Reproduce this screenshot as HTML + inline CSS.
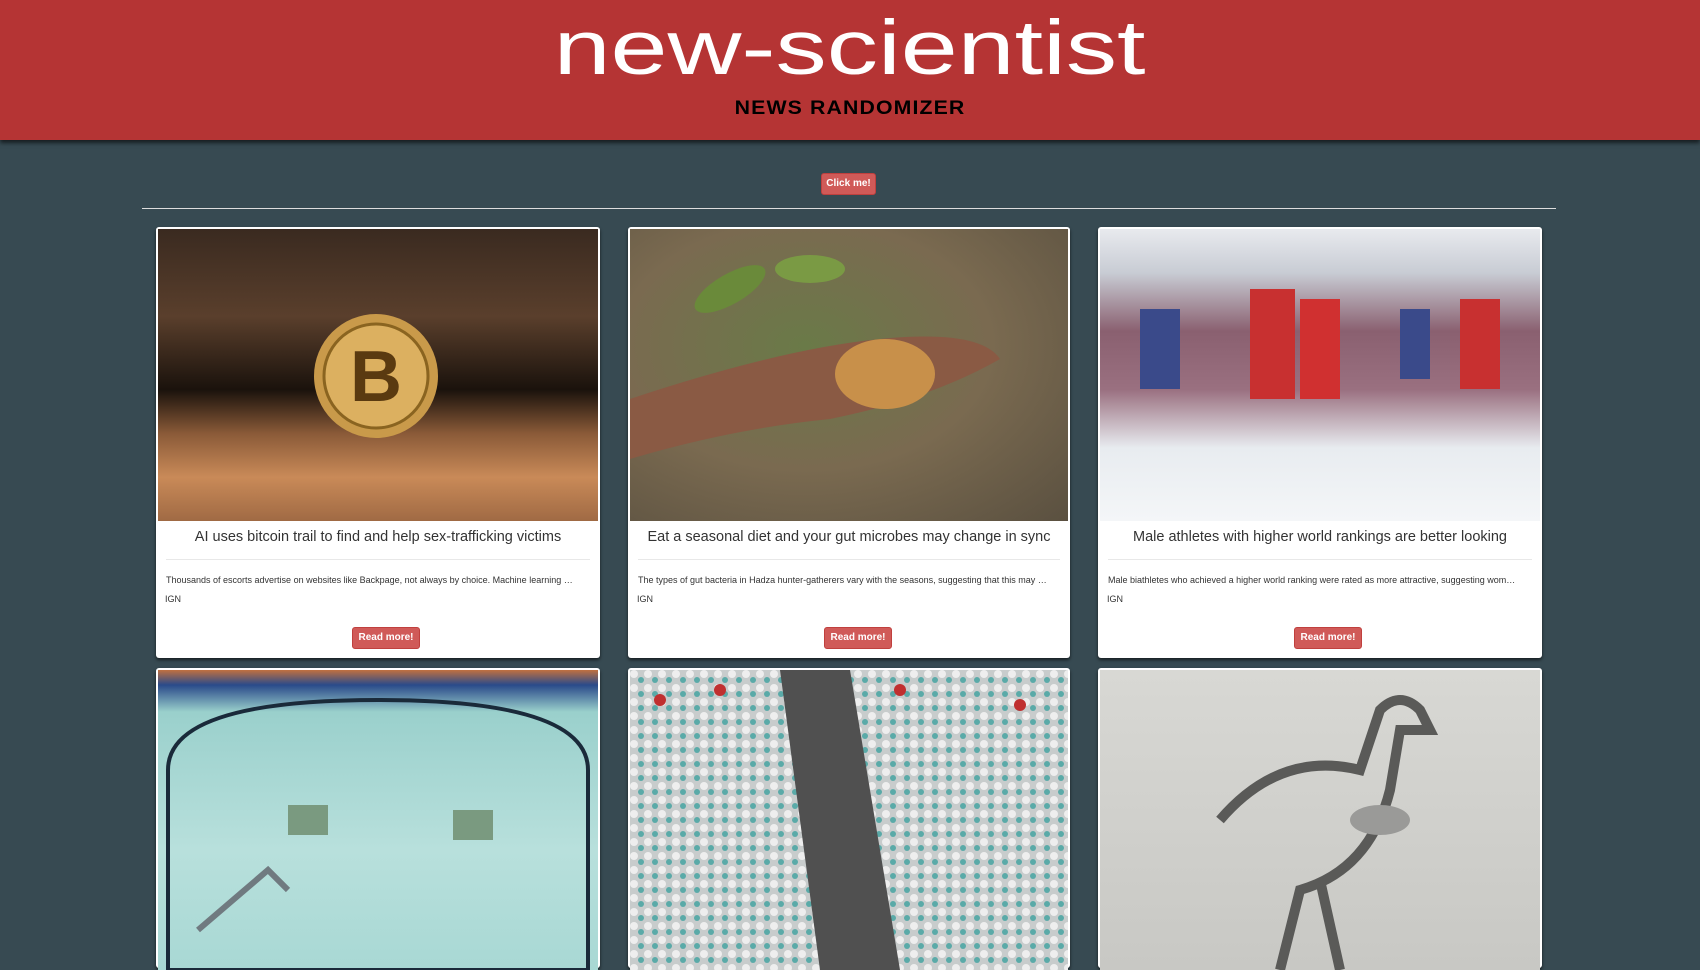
<!DOCTYPE html>
<html><head><meta charset="utf-8"><style>
*{margin:0;padding:0;box-sizing:border-box}
body{width:1700px;height:924px;overflow:hidden;background:#374a52;font-family:"Liberation Sans",sans-serif}
.hdr{position:absolute;left:0;top:0;width:1700px;height:140px;background:#b53434;box-shadow:0 3px 4px rgba(0,0,0,.6)}
.logo{position:absolute;left:0;width:1700px;top:-2px;text-align:center;color:#fff;font-size:77px;letter-spacing:0px;line-height:100px}
.logo span{display:inline-block;transform:scaleX(1.33)}
.sub{position:absolute;left:0;width:1700px;top:98px;text-align:center;font-weight:bold;font-size:19px;letter-spacing:1px;color:#000}
.sub span{display:inline-block;transform:scaleX(1.12)}
.btn{position:absolute;background:#d05a58;color:#fff;font-size:10px;font-weight:bold;text-align:center;border-radius:3px;border:1px solid #c0403e}
.hr{position:absolute;left:142px;top:208px;width:1414px;height:1px;background:#ddd}
.card{position:absolute;background:#fff;border-radius:3px;box-shadow:0 2px 3px rgba(0,0,0,.6)}
.img{position:absolute;left:2px;top:2px;right:2px;overflow:hidden}
.t{position:absolute;left:0;right:0;top:302px;text-align:center;font-size:14.5px;color:#333}
.d{position:absolute;left:10px;right:10px;top:332px;height:1px;background:#e8e8e8}
.p{position:absolute;left:10px;right:8px;top:348px;font-size:9px;color:#333;white-space:nowrap;overflow:hidden}
.s{position:absolute;left:9px;top:367px;font-size:9px;color:#333}
</style></head><body>
<div class="hdr"><div class="logo"><span>new-scientist</span></div><div class="sub"><span>NEWS RANDOMIZER</span></div></div>
<div class="btn" style="left:821px;top:173px;width:55px;height:22px;line-height:20px">Click me!</div>
<div class="hr"></div>

<!-- row 1 -->
<div class="card" style="left:156px;top:227px;width:444px;height:431px">
 <div class="img" style="height:292px;background:linear-gradient(180deg,#3a2a20 0%,#5a3f2c 30%,#1a120c 55%,#8a5a38 70%,#c98a58 85%,#a06a44 100%)">
  <svg width="440" height="292"><circle cx="218" cy="147" r="62" fill="#c99a4a"/><circle cx="218" cy="147" r="52" fill="#dcb060" stroke="#8a6420" stroke-width="3"/><text x="218" y="172" text-anchor="middle" font-size="72" font-weight="bold" fill="#5a3a10" font-family="Liberation Sans">B</text></svg>
 </div>
 <div class="t">AI uses bitcoin trail to find and help sex-trafficking victims</div><div class="d"></div>
 <div class="p">Thousands of escorts advertise on websites like Backpage, not always by choice. Machine learning …</div><div class="s">IGN</div>
 <div class="btn" style="left:196px;top:400px;width:68px;height:22px;line-height:20px">Read more!</div>
</div>
<div class="card" style="left:628px;top:227px;width:442px;height:431px">
 <div class="img" style="height:292px;background:radial-gradient(ellipse at 40% 40%,#6a7a48 0%,#7a6a50 50%,#5a5040 100%)">
  <svg width="440" height="292"><path d="M0 170 Q150 120 250 110 Q350 100 370 130 Q300 170 200 190 Q100 200 0 230Z" fill="#8a5a44"/><ellipse cx="255" cy="145" rx="50" ry="35" fill="#c8904a"/><ellipse cx="100" cy="60" rx="40" ry="15" fill="#6a8a3a" transform="rotate(-30 100 60)"/><ellipse cx="180" cy="40" rx="35" ry="14" fill="#7a9a44"/></svg>
 </div>
 <div class="t">Eat a seasonal diet and your gut microbes may change in sync</div><div class="d"></div>
 <div class="p">The types of gut bacteria in Hadza hunter-gatherers vary with the seasons, suggesting that this may …</div><div class="s">IGN</div>
 <div class="btn" style="left:196px;top:400px;width:68px;height:22px;line-height:20px">Read more!</div>
</div>
<div class="card" style="left:1098px;top:227px;width:444px;height:431px">
 <div class="img" style="height:292px;background:linear-gradient(180deg,#e8eaee 0%,#c8ccd4 15%,#8a6070 35%,#9a7080 55%,#e8ecf0 75%,#f4f6f8 100%)">
  <svg width="440" height="292"><rect x="150" y="60" width="45" height="110" fill="#c83030"/><rect x="200" y="70" width="40" height="100" fill="#d03030"/><rect x="40" y="80" width="40" height="80" fill="#3a4a8a"/><rect x="360" y="70" width="40" height="90" fill="#c83030"/><rect x="300" y="80" width="30" height="70" fill="#3a4a8a"/></svg>
 </div>
 <div class="t">Male athletes with higher world rankings are better looking</div><div class="d"></div>
 <div class="p">Male biathletes who achieved a higher world ranking were rated as more attractive, suggesting wom…</div><div class="s">IGN</div>
 <div class="btn" style="left:196px;top:400px;width:68px;height:22px;line-height:20px">Read more!</div>
</div>

<!-- row 2 -->
<div class="card" style="left:156px;top:668px;width:444px;height:300px">
 <div class="img" style="height:300px;background:linear-gradient(180deg,#c07040 0%,#2a4a8a 5%,#9ad0cc 14%,#b8e0dc 60%,#a8d8d4 100%)">
  <svg width="440" height="300"><path d="M10 100 Q10 30 220 30 Q430 30 430 100 L430 300 L10 300Z" fill="none" stroke="#1a2a3a" stroke-width="4"/><rect x="130" y="135" width="40" height="30" fill="#7a9a80"/><rect x="295" y="140" width="40" height="30" fill="#7a9a80"/><path d="M40 260 L110 200 L130 220" fill="none" stroke="#707a80" stroke-width="6"/></svg>
 </div>
</div>
<div class="card" style="left:628px;top:668px;width:442px;height:300px">
 <div class="img" style="height:300px;background:#b8c0c0">
  <svg width="440" height="300"><defs><pattern id="m" width="14" height="14" patternUnits="userSpaceOnUse"><rect width="14" height="14" fill="#c8cccc"/><circle cx="4" cy="4" r="4" fill="#eee"/><circle cx="11" cy="10" r="3" fill="#5aaaa8"/></pattern></defs><rect width="440" height="300" fill="url(#m)"/><path d="M150 0 L220 0 L270 300 L190 300Z" fill="#505050"/><circle cx="30" cy="30" r="6" fill="#c03030"/><circle cx="90" cy="20" r="6" fill="#c03030"/><circle cx="270" cy="20" r="6" fill="#c03030"/><circle cx="390" cy="35" r="6" fill="#c03030"/></svg>
 </div>
</div>
<div class="card" style="left:1098px;top:668px;width:444px;height:300px">
 <div class="img" style="height:300px;background:linear-gradient(180deg,#d8d8d4,#c8c8c4)">
  <svg width="440" height="300"><path d="M120 150 Q180 80 260 100 L280 40 Q300 20 320 40 L330 60 L300 60 L290 120 Q270 200 200 220 L180 300 M220 210 L240 300" fill="none" stroke="#5a5a58" stroke-width="10"/><ellipse cx="280" cy="150" rx="30" ry="15" fill="#9a9a98"/></svg>
 </div>
</div>
</body></html>
